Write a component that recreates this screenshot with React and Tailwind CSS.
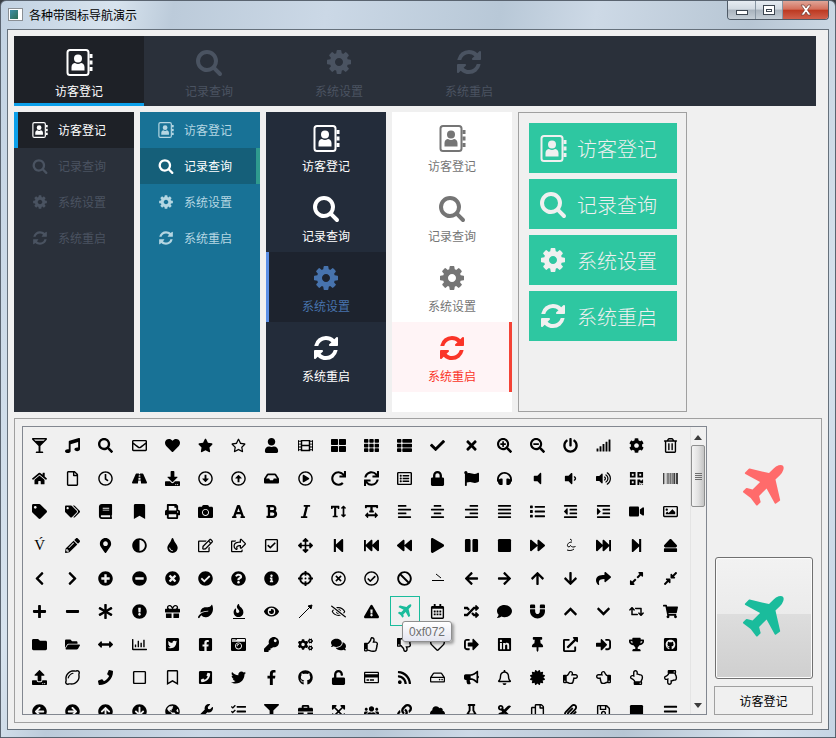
import React from 'react';
import {
  FaGlassMartiniAlt, FaMusic, FaSearch, FaRegEnvelope, FaHeart, FaStar, FaRegStar, FaUser, FaFilm, FaThLarge, FaTh, FaThList, FaCheck, FaTimes, FaSearchPlus, FaSearchMinus, FaPowerOff, FaSignal, FaCog, FaRegTrashAlt,
  FaHome, FaRegFile, FaRegClock, FaRoad, FaDownload, FaRegArrowAltCircleDown, FaRegArrowAltCircleUp, FaInbox, FaRegPlayCircle, FaRedo, FaSync, FaRegListAlt, FaLock, FaFlag, FaHeadphones, FaVolumeOff, FaVolumeDown, FaVolumeUp, FaQrcode, FaBarcode,
  FaTag, FaTags, FaBook, FaBookmark, FaPrint, FaCamera, FaFont, FaBold, FaItalic, FaTextHeight, FaTextWidth, FaAlignLeft, FaAlignCenter, FaAlignRight, FaAlignJustify, FaList, FaOutdent, FaIndent, FaVideo, FaRegImage,
  FaPencilAlt, FaMapMarkerAlt, FaAdjust, FaTint, FaRegEdit, FaRegShareSquare, FaRegCheckSquare, FaArrowsAlt, FaStepBackward, FaFastBackward, FaBackward, FaPlay, FaPause, FaStop, FaForward, FaFastForward, FaStepForward, FaEject,
  FaChevronLeft, FaChevronRight, FaPlusCircle, FaMinusCircle, FaTimesCircle, FaCheckCircle, FaQuestionCircle, FaInfoCircle, FaCrosshairs, FaRegTimesCircle, FaRegCheckCircle, FaBan, FaArrowLeft, FaArrowRight, FaArrowUp, FaArrowDown, FaShare, FaExpandAlt, FaCompressAlt,
  FaPlus, FaMinus, FaAsterisk, FaExclamationCircle, FaGift, FaLeaf, FaFire, FaEye, FaRegEyeSlash, FaExclamationTriangle, FaRegCalendarAlt, FaRandom, FaComment, FaMagnet, FaChevronUp, FaChevronDown, FaRetweet, FaShoppingCart,
  FaFolder, FaFolderOpen, FaArrowsAltH, FaRegChartBar, FaTwitterSquare, FaFacebookSquare, FaCameraRetro, FaKey, FaCogs, FaComments, FaRegThumbsUp, FaRegThumbsDown, FaRegHeart, FaSignOutAlt, FaLinkedin, FaThumbtack, FaExternalLinkAlt, FaSignInAlt, FaTrophy, FaGithubSquare,
  FaUpload, FaRegLemon, FaPhone, FaRegSquare, FaRegBookmark, FaPhoneSquare, FaTwitter, FaFacebookF, FaGithub, FaUnlock, FaRegCreditCard, FaRss, FaRegHdd, FaBullhorn, FaRegBell, FaCertificate, FaRegHandPointRight, FaRegHandPointLeft, FaRegHandPointUp, FaRegHandPointDown,
  FaArrowCircleLeft, FaArrowCircleRight, FaArrowCircleUp, FaArrowCircleDown, FaGlobeAmericas, FaWrench, FaTasks, FaFilter, FaBriefcase, FaExpandArrowsAlt, FaUsers, FaLink, FaCloud, FaFlask, FaCut, FaRegCopy, FaPaperclip, FaRegSave, FaSquare, FaBars,
} from 'react-icons/fa';

const SEARCH = 'M1216 832q0-185-131.500-316.500t-316.500-131.500-316.500 131.500-131.500 316.500 131.500 316.500 316.500 131.500 316.500-131.500 131.500-316.500zm512 832q0 52-38 90t-90 38q-54 0-90-38l-343-342q-179 124-399 124-143 0-273.500-55.500t-225-150-150-225-55.500-273.500 55.500-273.500 150-225 225-150 273.500-55.500 273.500 55.500 225 150 150 225 55.500 273.500q0 220-124 399l343 343q37 37 37 90z';
const COG = 'M1152 896q0-106-75-181t-181-75-181 75-75 181 75 181 181 75 181-75 75-181zm512-109v222q0 12-8 23t-20 13l-185 28q-19 54-39 91 35 50 107 138 10 12 10 25t-9 23q-27 37-99 108t-94 71q-12 0-26-9l-138-108q-44 23-91 38-16 136-29 186-7 28-36 28h-222q-14 0-24.500-8.500t-11.500-21.500l-28-184q-49-16-90-37l-141 107q-10 9-25 9-14 0-25-11-126-114-165-168-7-10-7-23 0-12 8-23 15-21 51-66.500t54-70.500q-27-50-41-99l-183-27q-13-2-21-12.500t-8-23.500v-222q0-12 8-23t19-13l186-28q14-46 39-92-40-57-107-138-10-12-10-24 0-10 9-23 26-36 98.500-107.500t94.500-71.500q13 0 26 10l138 107q44-23 91-38 16-136 29-186 7-28 36-28h222q14 0 24.500 8.500t11.500 21.500l28 184q49 16 90 37l142-107q9-9 24-9 13 0 25 10 129 119 165 170 7 8 7 22 0 12-8 23-15 21-51 66.500t-54 70.500q26 50 41 98l183 28q13 2 21 12.500t8 23.500z';
const REFRESH = 'M1639 1056q0 5-1 7-64 268-268 434.500t-478 166.500q-146 0-282.500-55t-243.500-157l-129 129q-19 19-45 19t-45-19-19-45v-448q0-26 19-45t45-19h448q26 0 45 19t19 45-19 45l-137 137q71 66 161 102t187 36q134 0 250-65t186-179q11-17 53-117 8-23 30-23h192q13 0 22.500 9.500t9.500 22.500zm25-800v448q0 26-19 45t-45 19h-448q-26 0-45-19t-19-45 19-45l138-138q-148-137-349-137-134 0-250 65t-186 179q-11 17-53 117-8 23-30 23h-199q-13 0-22.500-9.500t-9.500-22.500v-7q65-268 270-434.500t480-166.500q146 0 284 55.500t245 156.500l130-129q19-19 45-19t45 19 19 45z';
const PLANE = 'M1376 160q44 52 12 148t-108 172l-161 161 160 696q5 19-12 33l-128 96q-7 6-19 6-4 0-7-1-15-3-21-16l-279-508-259 259 53 194q5 17-8 31l-96 96q-9 9-23 9h-2q-15-2-24-13l-189-252-252-189q-11-7-13-23-1-13 9-25l96-97q9-9 23-9 6 0 8 1l194 53 259-259-508-279q-14-8-17-24-2-16 9-27l128-128q14-13 30-8l665 159 160-160q76-76 172-108t148 12z';

const Glyph = ({ d, size, className = '' }) => (
  <svg width={size} height={size} viewBox="0 0 1792 1792" fill="currentColor" className={className}><path d={d} /></svg>
);

const AddressBook = ({ size, className = '' }) => (
  <svg width={size} height={size} viewBox="0 0 26 27" fill="currentColor" className={className}>
    <rect x="1" y="1" width="21" height="25" rx="2.5" fill="none" stroke="currentColor" strokeWidth="2" />
    <rect x="23" y="5" width="3" height="4" />
    <rect x="23" y="11.500" width="3" height="4" />
    <rect x="23" y="18" width="3" height="4" />
    <circle cx="11.500" cy="9.500" r="4" />
    <path d="M5 21.500v-3.500c0-2.500 2-4 3.500-4 1 .7 2 1 3 1s2-.3 3-1c1.500 0 3.500 1.500 3.500 4v3.500z" />
  </svg>
);

const NAV = [
  { name: '访客登记', type: 'book', d: null },
  { name: '记录查询', type: 'path', d: SEARCH },
  { name: '系统设置', type: 'path', d: COG },
  { name: '系统重启', type: 'path', d: REFRESH },
];

const NavIcon = ({ item, size, book }) => (
  <span className="flex items-center justify-center" style={{ width: size, height: size }}>
    {item.type === 'book' ? <AddressBook size={book} /> : <Glyph d={item.d} size={size} />}
  </span>
);

// small glyphs that the icon font shows as odd letters
const OddLetter = () => <span className="font-['Liberation_Serif',serif] text-[15px] leading-none">V́</span>;
const Squiggle = () => (
  <svg width="14" height="14" viewBox="0 0 14 14" fill="none" stroke="currentColor" strokeWidth="1">
    <path d="M6 1l2 1.500M8 4C5 4 3 6 3.500 8c.5 1.500 2.500 1 3-.5M6.500 7.500c1 1.500 3 2 5 1M3 12c3 1 5 .5 7-1" />
  </svg>
);
const Dash = () => (
  <svg width="14" height="12" viewBox="0 0 14 12" fill="none" stroke="currentColor" strokeWidth="1">
    <path d="M5 2l5 4M1 8.500h12" />
  </svg>
);
const ThinArrow = () => (
  <svg width="15" height="15" viewBox="0 0 15 15" fill="currentColor" stroke="currentColor" strokeWidth="1">
    <path d="M1 14L13 2" fill="none" />
    <path d="M14 1l-1 4-3-3z" />
  </svg>
);
const FireLine = ({ size }) => (
  <span className="flex w-[12px] flex-col items-center border-b border-black pb-[1px]"><FaFire size={size - 2} /></span>
);

const ICON_ROWS = [
  [FaGlassMartiniAlt, FaMusic, FaSearch, FaRegEnvelope, FaHeart, FaStar, FaRegStar, FaUser, FaFilm, FaThLarge, FaTh, FaThList, FaCheck, FaTimes, FaSearchPlus, FaSearchMinus, FaPowerOff, FaSignal, FaCog, FaRegTrashAlt],
  [FaHome, FaRegFile, FaRegClock, FaRoad, FaDownload, FaRegArrowAltCircleDown, FaRegArrowAltCircleUp, FaInbox, FaRegPlayCircle, FaRedo, FaSync, FaRegListAlt, FaLock, FaFlag, FaHeadphones, FaVolumeOff, FaVolumeDown, FaVolumeUp, FaQrcode, FaBarcode],
  [FaTag, FaTags, FaBook, FaBookmark, FaPrint, FaCamera, FaFont, FaBold, FaItalic, FaTextHeight, FaTextWidth, FaAlignLeft, FaAlignCenter, FaAlignRight, FaAlignJustify, FaList, FaOutdent, FaIndent, FaVideo, FaRegImage],
  [OddLetter, FaPencilAlt, FaMapMarkerAlt, FaAdjust, FaTint, FaRegEdit, FaRegShareSquare, FaRegCheckSquare, FaArrowsAlt, FaStepBackward, FaFastBackward, FaBackward, FaPlay, FaPause, FaStop, FaForward, Squiggle, FaFastForward, FaStepForward, FaEject],
  [FaChevronLeft, FaChevronRight, FaPlusCircle, FaMinusCircle, FaTimesCircle, FaCheckCircle, FaQuestionCircle, FaInfoCircle, FaCrosshairs, FaRegTimesCircle, FaRegCheckCircle, FaBan, Dash, FaArrowLeft, FaArrowRight, FaArrowUp, FaArrowDown, FaShare, FaExpandAlt, FaCompressAlt],
  [FaPlus, FaMinus, FaAsterisk, FaExclamationCircle, FaGift, FaLeaf, FireLine, FaEye, ThinArrow, FaRegEyeSlash, FaExclamationTriangle, 'plane', FaRegCalendarAlt, FaRandom, FaComment, FaMagnet, FaChevronUp, FaChevronDown, FaRetweet, FaShoppingCart],
  [FaFolder, FaFolderOpen, FaArrowsAltH, FaRegChartBar, FaTwitterSquare, FaFacebookSquare, FaCameraRetro, FaKey, FaCogs, FaComments, FaRegThumbsUp, FaRegThumbsDown, FaRegHeart, FaSignOutAlt, FaLinkedin, FaThumbtack, FaExternalLinkAlt, FaSignInAlt, FaTrophy, FaGithubSquare],
  [FaUpload, FaRegLemon, FaPhone, FaRegSquare, FaRegBookmark, FaPhoneSquare, FaTwitter, FaFacebookF, FaGithub, FaUnlock, FaRegCreditCard, FaRss, FaRegHdd, FaBullhorn, FaRegBell, FaCertificate, FaRegHandPointRight, FaRegHandPointLeft, FaRegHandPointUp, FaRegHandPointDown],
  [FaArrowCircleLeft, FaArrowCircleRight, FaArrowCircleUp, FaArrowCircleDown, FaGlobeAmericas, FaWrench, FaTasks, FaFilter, FaBriefcase, FaExpandArrowsAlt, FaUsers, FaLink, FaCloud, FaFlask, FaCut, FaRegCopy, FaPaperclip, FaRegSave, FaSquare, FaBars],
];

function TitleBar() {
  return (
    <div className="flex h-[28px] shrink-0 items-start">
      <div className="mt-[7px] ml-[7px] flex h-[13px] w-[15px] border border-[#8a8f94] bg-white p-[1px]">
        <div className="h-full w-[8px] bg-[linear-gradient(135deg,#3f8fa8,#2f6f55)]" />
      </div>
      <span className="ml-[6px] mt-[5px] text-[12px] leading-[18px] text-black">各种带图标导航演示</span>
      <div className="flex-1" />
      <div className="mr-[6px] flex h-[19px] w-[102px] overflow-hidden rounded-b-[4px] border border-t-0 border-[#4f5a66]">
        <div className="flex w-[28px] items-center justify-center border-r border-[#8996a3] bg-[linear-gradient(#e6ecf2_0%,#d2dae2_45%,#a9b3bd_50%,#c5ced6_100%)]">
          <div className="mt-[4px] h-[5px] w-[12px] border border-[#3d4650] bg-white" />
        </div>
        <div className="flex w-[27px] items-center justify-center border-r border-[#8996a3] bg-[linear-gradient(#e6ecf2_0%,#d2dae2_45%,#a9b3bd_50%,#c5ced6_100%)]">
          <div className="flex h-[10px] w-[12px] items-center justify-center border border-[#3d4650] bg-white">
            <div className="h-[3px] w-[6px] border border-[#3d4650]" />
          </div>
        </div>
        <div className="flex flex-1 items-center justify-center bg-[linear-gradient(#e0a598_0%,#d4705c_45%,#bd3a22_52%,#d0604c_100%)]">
          <svg width="14" height="12" viewBox="0 0 14 12">
            <path d="M2 1h3l2 3 2-3h3L8.500 6 12 11H9L7 8l-2 3H2l3.500-5z" fill="#fff" stroke="#6f3a30" strokeWidth="0.7" />
          </svg>
        </div>
      </div>
    </div>
  );
}

function TopNav() {
  return (
    <div className="flex h-[70px] w-[802px] shrink-0 bg-[#2a303a]">
      {NAV.map((item, i) => (
        <div
          key={item.name}
          className={
            i === 0
              ? 'flex w-[130px] flex-col items-center border-b-[3px] border-[#0ca0ea] bg-[#1e2127] pt-[12px] text-white'
              : 'flex w-[130px] flex-col items-center pt-[12px] text-[#4a5361]'
          }
        >
          <NavIcon item={item} size={28} book={27} />
          <span className="mt-[7px] text-[12px] leading-[15px]">{item.name}</span>
        </div>
      ))}
    </div>
  );
}

function SideDark() {
  return (
    <div className="w-[120px] bg-[#2a303a]">
      {NAV.map((item, i) => (
        <div
          key={item.name}
          className={
            i === 0
              ? 'flex h-[36px] items-center gap-[10px] border-l-4 border-[#0ca0ea] bg-[#1e2127] pl-[14px] text-white'
              : 'flex h-[36px] items-center gap-[10px] pl-[18px] text-[#4a5361]'
          }
        >
          <NavIcon item={item} size={16} book={16} />
          <span className="text-[12px]">{item.name}</span>
        </div>
      ))}
    </div>
  );
}

function SideBlue() {
  return (
    <div className="w-[120px] bg-[#187296]">
      {NAV.map((item, i) => (
        <div
          key={item.name}
          className={
            i === 1
              ? 'flex h-[36px] items-center gap-[10px] border-r-4 border-[#2f9a8e] bg-[#155f79] pl-[18px] text-white'
              : 'flex h-[36px] items-center gap-[10px] pl-[18px] text-[#b4d6e2]'
          }
        >
          <NavIcon item={item} size={16} book={16} />
          <span className="text-[12px]">{item.name}</span>
        </div>
      ))}
    </div>
  );
}

function SideNavy() {
  return (
    <div className="w-[120px] bg-[#232c3a]">
      {NAV.map((item, i) => (
        <div
          key={item.name}
          className={
            i === 2
              ? 'flex h-[70px] flex-col items-center border-l-[3px] border-[#5b8fe6] bg-[#1d232e] pr-[3px] pt-[12px] text-[#4773ad]'
              : 'flex h-[70px] flex-col items-center pt-[12px] text-white'
          }
        >
          <NavIcon item={item} size={28} book={27} />
          <span className="mt-[6px] text-[12px] leading-[15px]">{item.name}</span>
        </div>
      ))}
    </div>
  );
}

function SideWhite() {
  return (
    <div className="w-[120px] bg-white">
      {NAV.map((item, i) => (
        <div
          key={item.name}
          className={
            i === 3
              ? 'flex h-[70px] flex-col items-center border-r-[3px] border-[#f44336] bg-[#fff4f6] pl-[3px] pt-[12px] text-[#fa3428]'
              : 'flex h-[70px] flex-col items-center pt-[12px] text-[#757575]'
          }
        >
          <NavIcon item={item} size={28} book={27} />
          <span className="mt-[6px] text-[12px] leading-[15px]">{item.name}</span>
        </div>
      ))}
    </div>
  );
}

function BigButtons() {
  return (
    <div className="flex w-[169px] flex-col gap-[6px] border border-[#a0a0a0] pl-[10px] pr-[9px] pt-[10px]">
      {NAV.map((item) => (
        <div key={item.name} className="flex h-[50px] items-center gap-[10px] bg-[#2ec7a1] pl-[10px] text-[#f0f0f0]">
          <NavIcon item={item} size={28} book={27} />
          <span className="pt-[2px] text-[20px] font-light leading-none">{item.name}</span>
        </div>
      ))}
    </div>
  );
}

function IconGrid() {
  return (
    <div className="h-full w-[667px] overflow-hidden">
      <div className="grid grid-cols-[repeat(20,33.2px)] auto-rows-[33.2px] pt-[2px] text-black">
        {ICON_ROWS.flat().map((Icon, i) =>
          Icon === 'plane' ? (
            <div key={i} className="flex items-center justify-center">
              <div className="mb-[2px] flex h-[30px] w-[30px] items-center justify-center border border-[#1abc9c] pl-[3px] pt-[1px] text-[#1abc9c]">
                <Glyph d={PLANE} size={17} />
              </div>
            </div>
          ) : (
            <div key={i} className="flex items-center justify-center">
              <Icon size={15} />
            </div>
          ),
        )}
      </div>
    </div>
  );
}

function ScrollBar() {
  return (
    <div className="flex w-[15px] flex-col border-l border-[#e4e4e4] bg-[#f0f0f0]">
      <div className="flex h-[18px] items-center justify-center pt-[2px]">
        <svg width="8" height="5" viewBox="0 0 8 5"><path d="M4 0l4 5H0z" fill="#3c3c3c" /></svg>
      </div>
      <div className="flex h-[62px] flex-col items-center justify-center gap-[1px] rounded-[2px] border border-[#8e8f8f] bg-[linear-gradient(90deg,#f4f4f4,#e2e2e2_50%,#c4c4c4)]">
        <div className="h-[1px] w-[7px] bg-[#6f6f6f]" />
        <div className="h-[1px] w-[7px] bg-[#6f6f6f]" />
        <div className="h-[1px] w-[7px] bg-[#6f6f6f]" />
        <div className="h-[1px] w-[7px] bg-[#6f6f6f]" />
      </div>
      <div className="flex-1" />
      <div className="flex h-[18px] items-center justify-center">
        <svg width="8" height="5" viewBox="0 0 8 5"><path d="M0 0h8L4 5z" fill="#3c3c3c" /></svg>
      </div>
    </div>
  );
}

function IconPanel() {
  return (
    <div className="flex min-h-0 flex-1 gap-[7px] border border-[#a0a0a0] p-[7px]">
      <div className="relative flex w-[685px] border border-[#828790]">
        <IconGrid />
        <ScrollBar />
        {/* tooltip of the hovered cell */}
        <div className="absolute left-[379px] top-[194px] flex h-[21px] w-[50px] items-center justify-center rounded-[3px] border border-[#8f8f8f] bg-[linear-gradient(#ffffff,#e4e5f0)] font-['Liberation_Sans',sans-serif] text-[12px] text-[#6e6e6e] shadow-[2px_2px_3px_rgba(0,0,0,0.35)]">
          0xf072
        </div>
      </div>
      <div className="flex w-[99px] flex-col">
        <div className="flex flex-1 items-center justify-center pb-[9px] pl-[10px] text-[#ff6b6b]">
          <Glyph d={PLANE} size={52} />
        </div>
        <div className="ml-[1px] flex h-[122px] items-center justify-center rounded-[3px] border border-[#707070] bg-[linear-gradient(#f2f2f2_0%,#ebebeb_47%,#dddddd_47%,#cfcfcf_100%)] pl-[10px] text-[#1abc9c] shadow-[inset_0_0_0_1px_#fcfcfc]">
          <Glyph d={PLANE} size={52} />
        </div>
        <div className="mt-[7px] flex h-[29px] items-center justify-center border border-[#a0a0a0] text-[12px] text-black">访客登记</div>
      </div>
    </div>
  );
}

export default function App() {
  return (
    <div className="h-[738px] w-[836px] overflow-hidden bg-[#3a3f45] font-['Noto_Sans_CJK_SC',sans-serif]">
      <div className="flex h-full flex-col rounded-t-[6px] border border-[#5a6470] bg-[linear-gradient(100deg,#c2d2e2_0%,#d7e3ee_12%,#bccbda_18%,#cbd8e6_34%,#b8c8d7_52%,#cdd9e6_62%,#b7c6d4_78%,#d5e1ec_92%,#c6d5e4_100%)] px-[6px] pb-[7px]">
        <div className="-mx-[6px]"><TitleBar /></div>
        <div className="flex min-h-0 flex-1 flex-col border border-[#66717c] bg-[#f0f0f0] px-[6px] pb-[6px] pt-[6px]">
          <TopNav />
          <div className="mt-[6px] flex h-[300px] shrink-0 gap-[6px]">
            <SideDark />
            <SideBlue />
            <SideNavy />
            <SideWhite />
            <BigButtons />
          </div>
          <div className="mt-[6px] flex min-h-0 flex-1">
            <IconPanel />
          </div>
        </div>
      </div>
    </div>
  );
}
